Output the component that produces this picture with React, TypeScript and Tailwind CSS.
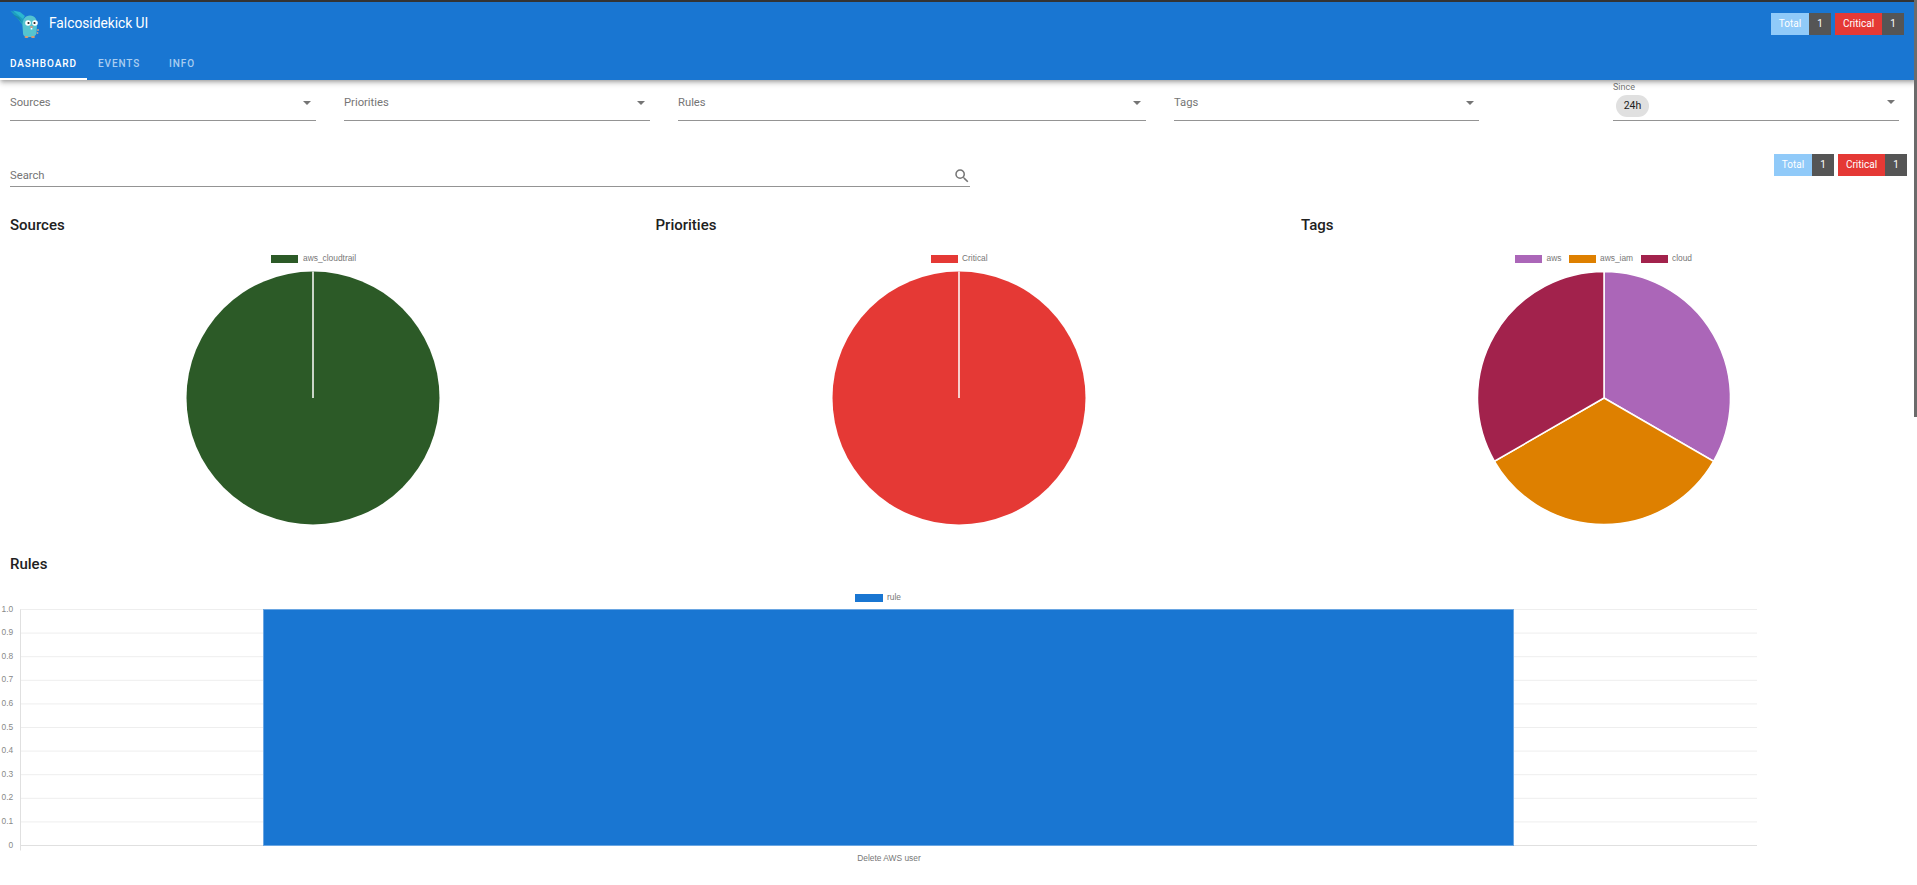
const font = "font-['Roboto',sans-serif]";
const chartFont = "Liberation Sans, Arial, sans-serif";

function Caret() {
  return <span className="w-0 h-0 border-x-[4px] border-x-transparent border-t-[4px] border-t-[#757575]" />;
}

function Select({ label, width }: { label: string; width: string }) {
  return (
    <div className={`${width} h-[41px] flex items-center justify-between border-b border-[#949494] pr-[5px] pt-[6px] shrink-0`}>
      <span className="text-[11.25px] text-[#757575]">{label}</span>
      <Caret />
    </div>
  );
}

function Badges() {
  return (
    <div className="flex gap-[4px] text-[10px] text-white leading-[22px]">
      <div className="flex">
        <span className="w-[38px] text-center bg-[#90caf9]">Total</span>
        <span className="w-[22px] text-center bg-[#555555]">1</span>
      </div>
      <div className="flex">
        <span className="w-[47px] text-center bg-[#e53935]">Critical</span>
        <span className="w-[22px] text-center bg-[#555555]">1</span>
      </div>
    </div>
  );
}

function Logo() {
  return (
    <svg width="30" height="28" viewBox="0 0 30 28" className="shrink-0">
      <path d="M0.5 1 L7 2 L14 7 L13 16 L8 9 Z" fill="#1f9fc0" />
      <path d="M3 0.5 L10 2 L15 6 L13 9 L7 4 Z" fill="#2cb8cf" />
      <path d="M2 4 L9 7 L12 12 L7 8 Z" fill="#178aa8" />
      <path d="M12.5 16 C12.5 9 15 5.5 20 5.5 C25 5.5 27 9 27 15 L26.5 23 C26 26 23.5 27 19.5 27 C15 27 13 26 13 23 Z" fill="#55c4d0" />
      <circle cx="18" cy="13" r="2.8" fill="#fff" />
      <circle cx="25" cy="13" r="2.8" fill="#fff" />
      <circle cx="18.5" cy="13" r="1.1" fill="#222" />
      <circle cx="24.5" cy="13" r="1.1" fill="#222" />
      <ellipse cx="21.5" cy="17" rx="1.7" ry="1.1" fill="#c99c86" />
      <rect x="20.7" y="18" width="1.6" height="1.5" fill="#fff" />
      <circle cx="28" cy="20" r="1" fill="#c99c86" />
      <circle cx="27.5" cy="23" r="0.9" fill="#c99c86" />
      <ellipse cx="16.5" cy="27" rx="2" ry="1" fill="#e0a06a" />
      <ellipse cx="23" cy="27" rx="2" ry="1" fill="#e0a06a" />
    </svg>
  );
}

function polar(cx: number, cy: number, r: number, deg: number) {
  const a = ((deg - 90) * Math.PI) / 180;
  return [cx + r * Math.cos(a), cy + r * Math.sin(a)];
}

function slice(cx: number, cy: number, r: number, a: number, b: number) {
  const [x1, y1] = polar(cx, cy, r, a);
  const [x2, y2] = polar(cx, cy, r, b);
  return `M${cx} ${cy} L${x1} ${y1} A${r} ${r} 0 ${b - a > 180 ? 1 : 0} 1 ${x2} ${y2} Z`;
}

type Item = { label: string; color: string; box: number; text: number };

function Pie({ title, items, values }: { title: string; items: Item[]; values: number[] }) {
  const cx = 303;
  const cy = 162;
  const r = 126.5;
  const total = values.reduce((a, b) => a + b, 0);
  let start = 0;
  return (
    <div className="w-[645.5px] shrink-0">
      <h2 className="text-[15px] font-medium leading-[22px] text-[#212121]">{title}</h2>
      <svg width="646" height="317" className="block">
        {items.map((it) => (
          <g key={it.label}>
            <rect x={it.box} y="19" width="27" height="8" fill={it.color} />
            <text x={it.text} y="25" fontSize="8.4" fill="#777" fontFamily={chartFont}>{it.label}</text>
          </g>
        ))}
        {values.length === 1 ? (
          <>
            <circle cx={cx} cy={cy} r={r} fill={items[0].color} />
            <line x1={cx} y1={cy} x2={cx} y2={cy - r} stroke="#fff" strokeWidth="1.5" />
          </>
        ) : (
          values.map((v, i) => {
            const a = start;
            const b = start + (v / total) * 360;
            start = b;
            return <path key={i} d={slice(cx, cy, r, a, b)} fill={items[i].color} stroke="#fff" strokeWidth="1.5" />;
          })
        )}
      </svg>
    </div>
  );
}

function BarChart() {
  const ticks = ["1.0", "0.9", "0.8", "0.7", "0.6", "0.5", "0.4", "0.3", "0.2", "0.1", "0"];
  const top = 34.5;
  const bottom = 270.5;
  const step = (bottom - top) / 10;
  return (
    <svg width="1760" height="310" className="block" fontFamily={chartFont}>
      <rect x="855" y="19" width="28" height="8" fill="#1976d2" />
      <text x="887" y="25" fontSize="8.4" fill="#777">rule</text>
      {ticks.map((t, i) => {
        const y = top + i * step;
        return (
          <g key={t}>
            <line x1="20" x2="1757" y1={y} y2={y} stroke={i === 10 ? "#e0e0e0" : "#eeeeee"} strokeWidth="1" />
            <text x={t === "0" ? 8.5 : 1.5} y={y + 2} fontSize="8.4" fill="#888">{t}</text>
          </g>
        );
      })}
      <line x1="20.5" x2="20.5" y1={top} y2={bottom + 5} stroke="#e0e0e0" />
      <rect x="263.5" y={top} width="1250" height={bottom - top} fill="#1976d2" stroke="#6aa6e2" strokeWidth="1" />
      <text x="889" y="285.5" fontSize="8.4" fill="#777" textAnchor="middle">Delete AWS user</text>
    </svg>
  );
}

export default function App() {
  return (
    <div className={`${font} relative h-[885px] overflow-hidden bg-white`}>
      <header className="h-[80px] bg-[#1976d2] border-t-2 border-t-[#333333] shadow-[0_2px_4px_-1px_rgba(0,0,0,0.3),0_4px_5px_0_rgba(0,0,0,0.14)] flex flex-col relative z-10">
        <div className="h-[44px] flex items-center justify-between pl-[10px] pr-[13px]">
          <div className="flex items-center gap-[9px]">
            <Logo />
            <span className="text-[13.75px] text-white leading-none">Falcosidekick UI</span>
          </div>
          <Badges />
        </div>
        <nav className="flex flex-1 items-stretch text-[10px] font-medium tracking-[0.09em]">
          <div className="w-[87px] flex items-center pl-[10px] pt-[3px] text-white border-b-2 border-white">DASHBOARD</div>
          <div className="w-[82px] flex items-center pl-[11px] pt-[1px] text-[#a9cdf0]">EVENTS</div>
          <div className="flex items-center pt-[1px] text-[#a9cdf0]">INFO</div>
        </nav>
      </header>

      <div className="flex pl-[10px]">
        <div className="flex gap-[28px]">
          <Select label="Sources" width="w-[306px]" />
          <Select label="Priorities" width="w-[306px]" />
          <Select label="Rules" width="w-[468px]" />
          <Select label="Tags" width="w-[305px]" />
        </div>
        <div className="ml-[134px] w-[286px] h-[41px] border-b border-[#949494] relative flex justify-between items-start pr-[4px]">
          <span className="absolute left-0 top-[3px] text-[9px] leading-none text-[#757575]">Since</span>
          <span className="mt-[15px] ml-[3px] h-[22px] w-[33px] rounded-full bg-[#e0e0e0] text-[10.5px] text-[#212121] flex items-center justify-center">24h</span>
          <span className="mt-[20px] flex"><Caret /></span>
        </div>
      </div>

      <div className="flex justify-between items-start pl-[10px] pr-[10px] mt-[33px]">
        <div className="w-[960px] h-[33px] border-b border-[#949494] flex items-center justify-between pt-[12px]">
          <span className="text-[11.25px] text-[#757575]">Search</span>
          <svg width="18" height="18" viewBox="0 0 24 24" fill="#757575" className="mr-[-1px]">
            <path d="M15.5 14h-.79l-.28-.27A6.47 6.47 0 0 0 16 9.5 6.5 6.5 0 1 0 9.5 16c1.61 0 3.09-.59 4.23-1.57l.27.28v.79l5 4.99L20.49 19l-4.99-5zm-6 0C7.01 14 5 11.99 5 9.5S7.01 5 9.5 5 14 7.01 14 9.5 11.99 14 9.5 14z" />
          </svg>
        </div>
        <Badges />
      </div>

      <div className="flex pl-[10px] mt-[27px]">
        <Pie title="Sources" values={[1]} items={[{ label: "aws_cloudtrail", color: "#2c5a27", box: 261, text: 293 }]} />
        <Pie title="Priorities" values={[1]} items={[{ label: "Critical", color: "#e53935", box: 275, text: 306 }]} />
        <Pie
          title="Tags"
          values={[1, 1, 1]}
          items={[
            { label: "aws", color: "#ab66b8", box: 214, text: 245.5 },
            { label: "aws_iam", color: "#de8000", box: 268, text: 299 },
            { label: "cloud", color: "#a2224c", box: 340, text: 371 },
          ]}
        />
      </div>

      <div className="pl-[10px]">
        <h2 className="text-[15px] font-medium leading-[22px] text-[#212121]">Rules</h2>
      </div>
      <BarChart />

      <div className="absolute right-0 top-0 w-[3px] h-[417px] bg-[#6b6b6b] z-20" />
    </div>
  );
}
